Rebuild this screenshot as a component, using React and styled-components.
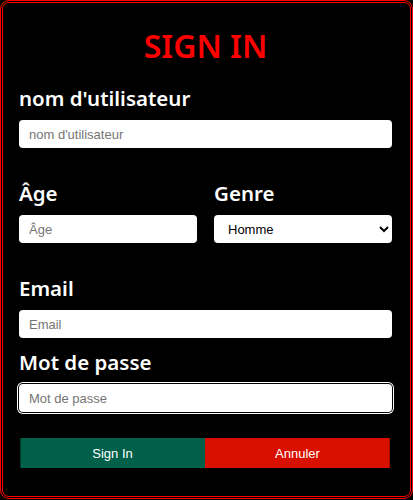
import React, { useState } from 'react';
import styled, { createGlobalStyle, css } from 'styled-components';

const GlobalStyle = createGlobalStyle`
  * { box-sizing: border-box; }
  html, body {
    margin: 0;
    padding: 0;
    background: #000;
  }
`;

// --- LAYOUT ---
const Card = styled.form`
  width: 413px;
  min-height: 499px;
  background: #000;
  border: 3px double #ff0000;
  border-radius: 9px;
  padding: 24px 18px 20px 16px;
  font-family: 'Noto Sans', 'Open Sans', sans-serif;
  display: flex;
  flex-direction: column;
`;

const Title = styled.h1`
  margin: 0 0 19px;
  text-align: center;
  color: #ff0000;
  font-size: 32px;
  font-weight: 600;
  line-height: 38px;
`;

const Field = styled.div`
  display: flex;
  flex-direction: column;
  margin-bottom: ${({ gap }) => gap || 0}px;
`;

const Row = styled.div`
  display: grid;
  grid-template-columns: 1fr 1fr;
  column-gap: 17px;
  margin-bottom: 31px;
`;

const Label = styled.label`
  color: #fff;
  font-size: 20.5px;
  font-weight: 600;
  line-height: 28px;
  margin-bottom: 8px;
`;

const ringStyle = css`
  box-shadow: 0 0 0 1px #000, 0 0 0 2px #fff;
`;

const Input = styled.input`
  width: 100%;
  height: 28px;
  border: none;
  border-radius: 4px;
  background: #fff;
  padding: 0 10px;
  font-family: 'Liberation Sans', Arial, sans-serif;
  font-size: 13px;
  color: #000;
  outline: none;
  ${({ focused }) => focused && ringStyle}

  &::placeholder {
    color: #757575;
  }
`;

const Select = styled.select`
  width: 100%;
  height: 28px;
  border: none;
  border-radius: 4px;
  background: #fff;
  padding: 0 10px;
  font-family: 'Liberation Sans', Arial, sans-serif;
  font-size: 13px;
  color: #000;
  outline: none;
`;

const Buttons = styled.div`
  display: grid;
  grid-template-columns: 1fr 1fr;
  margin: 26px 2px 0 1px;
`;

const Button = styled.button`
  height: 30px;
  border: none;
  font-family: 'Liberation Sans', Arial, sans-serif;
  font-size: 13px;
  color: #fff;
  cursor: pointer;
  background: ${({ variant }) => (variant === 'cancel' ? '#d90f00' : '#00604a')};
  border-left: 1px solid ${({ variant }) => (variant === 'cancel' ? '#d90f00' : '#003d2f')};
  border-right: 1px solid ${({ variant }) => (variant === 'cancel' ? '#a80c00' : '#00604a')};
`;

// --- PAGE ---
const App = () => {
  const [genre, setGenre] = useState('homme');

  return (
    <>
      <GlobalStyle />
      <Card onSubmit={(e) => e.preventDefault()}>
        <Title>SIGN IN</Title>

        <Field gap={31}>
          <Label htmlFor="user">nom d'utilisateur</Label>
          <Input id="user" placeholder="nom d'utilisateur" />
        </Field>

        <Row>
          <Field>
            <Label htmlFor="age">Âge</Label>
            <Input id="age" placeholder="Âge" />
          </Field>
          <Field>
            <Label htmlFor="genre">Genre</Label>
            <Select id="genre" value={genre} onChange={(e) => setGenre(e.target.value)}>
              <option value="homme">Homme</option>
              <option value="femme">Femme</option>
            </Select>
          </Field>
        </Row>

        <Field gap={10}>
          <Label htmlFor="email">Email</Label>
          <Input id="email" type="email" placeholder="Email" />
        </Field>

        <Field>
          <Label htmlFor="pass">Mot de passe</Label>
          <Input id="pass" type="password" placeholder="Mot de passe" focused autoFocus />
        </Field>

        <Buttons>
          <Button type="submit">Sign In</Button>
          <Button type="button" variant="cancel">Annuler</Button>
        </Buttons>
      </Card>
    </>
  );
};

export default App;
